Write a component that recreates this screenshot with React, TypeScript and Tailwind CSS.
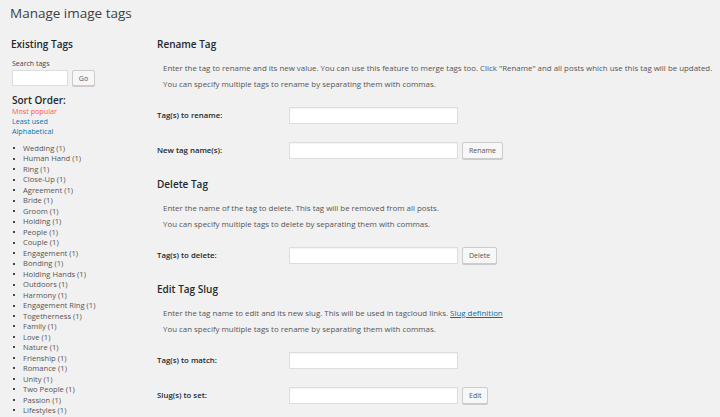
import React from "react";

const tags = [
  "Wedding", "Human Hand", "Ring", "Close-Up", "Agreement", "Bride", "Groom", "Holding",
  "People", "Couple", "Engagement", "Bonding", "Holding Hands", "Outdoors", "Harmony",
  "Engagement Ring", "Togetherness", "Family", "Love", "Nature", "Frienship", "Romance",
  "Unity", "Two People", "Passion", "Lifestyles",
];

function Field({ label, button }: { label: string; button?: string }) {
  return (
    <div className="flex h-[17px] items-center">
      <label className="w-[132px] text-[7.8px] font-semibold text-[#23282d]">{label}</label>
      <input className="h-[17px] w-[169px] border border-[#ddd] bg-white shadow-[inset_0_1px_1px_rgba(0,0,0,0.05)]" />
      {button && (
        <button className="ml-[4px] h-[17px] rounded-[2px] border border-[#ccc] bg-[#f7f7f7] px-[6px] text-[7px] leading-none text-[#555] shadow-[0_1px_0_#ccc]">
          {button}
        </button>
      )}
    </div>
  );
}

function Section({
  title,
  lines,
  children,
}: {
  title: string;
  lines: React.ReactNode[];
  children: React.ReactNode;
}) {
  return (
    <section>
      <h3 className="h-[16px] text-[10px] font-semibold leading-[16px] text-[#23282d]">{title}</h3>
      <div className="mt-[8px] pl-[6px] text-[7.9px] leading-[16px] text-[#555]">
        {lines.map((l, i) => (
          <p key={i} className="whitespace-nowrap">{l}</p>
        ))}
      </div>
      <div className="mt-[15px] flex flex-col gap-[18px]">{children}</div>
    </section>
  );
}

export default function App() {
  return (
    <div
      className="h-[417px] w-[720px] overflow-hidden bg-[#f1f1f1] text-[#444]"
      style={{ fontFamily: '"Open Sans", "Noto Sans", sans-serif' }}
    >
      <h1 className="h-[26px] pl-[10px] text-[13.5px] leading-[26px] text-[#3c4146]">Manage image tags</h1>

      <div className="flex">
        {/* Left column */}
        <div className="w-[157px] shrink-0 pl-[11px] pt-[10px]">
          <h3 className="h-[16px] text-[10px] font-semibold leading-[16px] text-[#23282d]">Existing Tags</h3>
          <p className="mt-[7px] pl-[1px] text-[7px] leading-[10px] text-[#444]">Search tags</p>
          <div className="mt-[1px] flex items-center gap-[4px] pl-[1px]">
            <input className="h-[16px] w-[56px] border border-[#ddd] bg-white" />
            <button className="h-[16px] w-[23px] rounded-[2px] border border-[#ccc] bg-[#f7f7f7] text-[7px] leading-none text-[#555] shadow-[0_1px_0_#ccc]">
              Go
            </button>
          </div>
          <p className="mt-[9px] pl-[1px] text-[10px] font-semibold leading-[11px] text-[#23282d]">Sort Order:</p>
          <div className="pl-[1px] text-[7.2px] leading-[10px]">
            <p className="text-[#f55]">Most popular</p>
            <p className="text-[#0073aa]">Least used</p>
            <p className="text-[#0073aa]">Alphabetical</p>
          </div>
          <ul className="mt-[7px] pl-[2px] text-[7.6px] leading-[10.48px] text-[#555]">
            {tags.map((t) => (
              <li key={t} className="flex items-center">
                <span className="mr-[8px] h-[2px] w-[2px] bg-[#444]" />
                {t} (1)
              </li>
            ))}
          </ul>
        </div>

        {/* Right column */}
        <div className="flex flex-1 flex-col gap-[17px] pt-[10px]">
          <Section
            title="Rename Tag"
            lines={[
              'Enter the tag to rename and its new value. You can use this feature to merge tags too. Click "Rename" and all posts which use this tag will be updated.',
              "You can specify multiple tags to rename by separating them with commas.",
            ]}
          >
            <Field label="Tag(s) to rename:" />
            <Field label="New tag name(s):" button="Rename" />
          </Section>

          <Section
            title="Delete Tag"
            lines={[
              "Enter the name of the tag to delete. This tag will be removed from all posts.",
              "You can specify multiple tags to delete by separating them with commas.",
            ]}
          >
            <Field label="Tag(s) to delete:" button="Delete" />
          </Section>

          <Section
            title="Edit Tag Slug"
            lines={[
              <>
                Enter the tag name to edit and its new slug. This will be used in tagcloud links.{" "}
                <a className="text-[#0073aa] underline">Slug definition</a>
              </>,
              "You can specify multiple tags to rename by separating them with commas.",
            ]}
          >
            <Field label="Tag(s) to match:" />
            <Field label="Slug(s) to set:" button="Edit" />
          </Section>
        </div>
      </div>
    </div>
  );
}
